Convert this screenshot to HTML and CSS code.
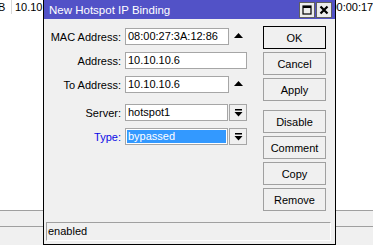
FILE: index.html
```html
<!DOCTYPE html>
<html lang="en">
<head>
    <meta charset="UTF-8">
    <title>New Hotspot IP Binding</title>
    <link rel="stylesheet" href="styles.css">
</head>
<body>
    <!-- daftar di belakang jendela -->
    <div class="list">
        <div class="list-row">
            <div class="cell cell-a">B</div>
            <div class="cell cell-b">10.10</div>
            <div class="cell cell-c">00:00:17</div>
        </div>
        <div class="list-space"></div>
        <div class="list-tools"></div>
        <div class="list-status"></div>
    </div>

    <!-- jendela dialog -->
    <div class="dialog">
        <div class="titlebar">
            <span class="title">New Hotspot IP Binding</span>
            <div class="title-buttons">
                <span class="tbtn">
                    <svg width="10" height="10" viewBox="0 0 10 10"><rect x="1" y="1" width="8" height="8" fill="none" stroke="#000" stroke-width="1.2"/><rect x="1" y="1" width="8" height="2" fill="#000"/></svg>
                </span>
                <span class="tbtn">
                    <svg width="10" height="10" viewBox="0 0 10 10"><path d="M1.5 1.5 L8.5 8.5 M8.5 1.5 L1.5 8.5" stroke="#000" stroke-width="2.2"/></svg>
                </span>
            </div>
        </div>

        <div class="body">
            <div class="form">
                <label class="lbl">MAC Address:</label>
                <div class="field">
                    <div class="input short">08:00:27:3A:12:86</div>
                    <span class="updown"><svg width="9" height="5" viewBox="0 0 9 5"><path d="M0 5 L4.5 0 L9 5 Z" fill="#000"/></svg></span>
                </div>

                <label class="lbl">Address:</label>
                <div class="field">
                    <div class="input full">10.10.10.6</div>
                </div>

                <label class="lbl">To Address:</label>
                <div class="field">
                    <div class="input short">10.10.10.6</div>
                    <span class="updown"><svg width="9" height="5" viewBox="0 0 9 5"><path d="M0 5 L4.5 0 L9 5 Z" fill="#000"/></svg></span>
                </div>

                <label class="lbl group">Server:</label>
                <div class="field group">
                    <div class="input combo">hotspot1</div>
                    <span class="drop"><svg width="9" height="8" viewBox="0 0 9 8"><rect x="1" y="0" width="7" height="1.5" fill="#000"/><path d="M0.5 3 L8.5 3 L4.5 7.5 Z" fill="#000"/></svg></span>
                </div>

                <label class="lbl blue">Type:</label>
                <div class="field">
                    <div class="input combo selected"><span>bypassed</span></div>
                    <span class="drop"><svg width="9" height="8" viewBox="0 0 9 8"><rect x="1" y="0" width="7" height="1.5" fill="#000"/><path d="M0.5 3 L8.5 3 L4.5 7.5 Z" fill="#000"/></svg></span>
                </div>
            </div>

            <div class="buttons">
                <button class="btn default">OK</button>
                <button class="btn">Cancel</button>
                <button class="btn">Apply</button>
                <button class="btn sep">Disable</button>
                <button class="btn">Comment</button>
                <button class="btn">Copy</button>
                <button class="btn">Remove</button>
            </div>
        </div>

        <div class="statusbar">enabled</div>
    </div>
</body>
</html>
```

FILE: styles.css
```css
/* gaya jendela klasik */
body {
    font-family: "Liberation Sans", Arial, sans-serif;
    font-size: 11px;
    margin: 0;
    padding: 0;
    background-color: white;
    color: black;
    width: 373px;
    height: 245px;
    overflow: hidden;
    position: relative;
}
.list {
    display: flex;
    flex-direction: column;
    height: 245px;
}
.list-row {
    display: flex;
    height: 14px;
    line-height: 14px;
}
.cell {
    white-space: nowrap;
    overflow: hidden;
}
.cell-a {
    width: 13px;
    margin-left: -2px;
    border-right: 1px solid #d8d8d8;
}
.cell-b {
    width: 314px;
    padding-left: 3px;
}
.cell-c {
    padding-left: 3px;
}
.list-space {
    flex: 1;
}
.list-tools {
    height: 15px;
    background-color: #f0f0f0;
    border-top: 1px solid #a0a0a0;
}
.list-status {
    height: 18px;
    background-color: #f0f0f0;
    border-top: 1px solid #a0a0a0;
}
.dialog {
    position: absolute;
    left: 43px;
    top: -1px;
    width: 293px;
    height: 246px;
    box-sizing: border-box;
    border: 1px solid #000;
    background-color: #f0f0f0;
    display: flex;
    flex-direction: column;
}
.titlebar {
    height: 19px;
    background-color: #5252c7;
    display: flex;
    align-items: center;
    justify-content: space-between;
    padding: 0 3px 0 5px;
}
.title {
    color: white;
    font-size: 11.5px;
}
.title-buttons {
    display: flex;
    gap: 1px;
}
.tbtn {
    width: 14px;
    height: 14px;
    border: 1px solid #606060;
    background-color: #ececec;
    display: flex;
    align-items: center;
    justify-content: center;
}
.body {
    flex: 1;
    display: flex;
    align-items: flex-start;
}
.form {
    display: grid;
    grid-template-columns: 77px 122px;
    column-gap: 4px;
    row-gap: 7px;
    padding-top: 9px;
    align-items: center;
}
.lbl {
    text-align: right;
    white-space: nowrap;
}
.lbl.blue {
    color: #0a0ae6;
}
.group {
    margin-top: 4px;
}
.field {
    display: flex;
    align-items: center;
    height: 17px;
}
.input {
    height: 17px;
    box-sizing: border-box;
    border: 1px solid #a6a6a6;
    background-color: white;
    padding-left: 2px;
    line-height: 15px;
    white-space: nowrap;
}
.input.short {
    width: 104px;
}
.input.full {
    width: 122px;
}
.input.combo {
    width: 103px;
    margin-right: 1px;
}
.input.selected {
    padding: 1px;
}
.input.selected span {
    display: block;
    height: 13px;
    line-height: 13px;
    background-color: #3399ff;
    color: white;
    padding-left: 1px;
}
.updown {
    width: 18px;
    display: flex;
    justify-content: center;
    margin-top: -3px;
}
.drop {
    width: 18px;
    height: 17px;
    box-sizing: border-box;
    border: 1px solid #a6a6a6;
    background-color: #f0f0f0;
    display: flex;
    align-items: center;
    justify-content: center;
}
.buttons {
    display: flex;
    flex-direction: column;
    gap: 3px;
    padding-top: 7px;
    margin-left: 16px;
}
.btn {
    width: 63px;
    height: 23px;
    box-sizing: border-box;
    border: 1px solid #a0a0a0;
    background-color: #f0f0f0;
    font-family: "Liberation Sans", Arial, sans-serif;
    font-size: 11px;
    color: black;
    padding: 0;
}
.btn.default {
    border-color: #000;
}
.btn.sep {
    margin-top: 6px;
}
.statusbar {
    height: 19px;
    margin: 0 4px 3px 2px;
    box-sizing: border-box;
    border-top: 1px solid #a0a0a0;
    border-left: 1px solid #a0a0a0;
    border-bottom: 1px solid #fff;
    border-right: 1px solid #fff;
    line-height: 17px;
    padding-left: 1px;
}
```
